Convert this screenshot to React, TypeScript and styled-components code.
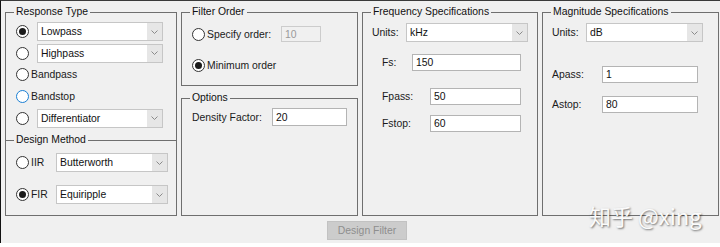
import React from 'react';
import styled, { createGlobalStyle } from 'styled-components';

const Global = createGlobalStyle`
  html, body { margin: 0; padding: 0; background: #ffffff; }
  body { font-family: "Liberation Sans", Arial, sans-serif; font-size: 10.4px; color: #000; }
`;

const Window = styled.div`
  position: relative;
  box-sizing: border-box;
  width: 720px;
  height: 243px;
  background: #f0f0f0;
  border-top: 1px solid #3a3a3a;
  border-left: 1px solid #111;
  padding: 5px 0 0 4px;
  display: flex;
  flex-direction: column;
`;

const Panels = styled.div`
  display: flex;
  gap: 4px;
  height: 210px;
`;

const Column = styled.div<{ $w: number }>`
  width: ${p => p.$w}px;
  display: flex;
  flex-direction: column;
`;

const Group = styled.fieldset<{ $h?: number; $mt?: number; $open?: boolean; $fill?: boolean }>`
  margin: ${p => p.$mt ?? 0}px 0 0 0;
  padding: 0;
  min-width: 0;
  border: 1px solid #6f6f6f;
  ${p => (p.$open ? 'border-bottom: none;' : '')}
  ${p => (p.$h ? `height: ${p.$h}px; flex: none;` : '')}
  ${p => (p.$fill ? 'flex: 1;' : '')}
  box-sizing: border-box;
`;

const Title = styled.legend`
  margin-left: 8px;
  padding: 0 2px;
  font-size: 10.4px;
  line-height: 12px;
  color: #111;
`;

const Body = styled.div<{ $pt: number; $pl: number; $gap?: number }>`
  display: flex;
  flex-direction: column;
  gap: ${p => p.$gap ?? 0}px;
  padding: ${p => p.$pt}px 0 0 ${p => p.$pl}px;
`;

const Row = styled.div<{ $h?: number; $mt?: number; $pl?: number }>`
  display: flex;
  align-items: center;
  height: ${p => p.$h ?? 19}px;
  margin-top: ${p => p.$mt ?? 0}px;
  padding-left: ${p => p.$pl ?? 0}px;
`;

const Radio = styled.span<{ $checked?: boolean; $focus?: boolean }>`
  box-sizing: border-box;
  flex: none;
  width: 13px;
  height: 13px;
  border-radius: 50%;
  border: 1px solid ${p => (p.$focus ? '#1a7fd4' : '#333')};
  background: #fff;
  display: flex;
  align-items: center;
  justify-content: center;
  &::after {
    content: '';
    display: ${p => (p.$checked ? 'block' : 'none')};
    width: 7px;
    height: 7px;
    border-radius: 50%;
    background: #1b1b1b;
  }
`;

const Label = styled.span<{ $w?: number; $ml?: number; $dim?: boolean }>`
  flex: none;
  ${p => (p.$w ? `width: ${p.$w}px;` : '')}
  margin-left: ${p => p.$ml ?? 0}px;
  color: ${p => (p.$dim ? '#999' : '#1a1a1a')};
  white-space: nowrap;
`;

const Select = styled.div<{ $w: number; $ml?: number }>`
  box-sizing: border-box;
  flex: none;
  width: ${p => p.$w}px;
  height: 19px;
  margin-left: ${p => p.$ml ?? 0}px;
  border: 1px solid #c6c6c6;
  background: #fff;
  display: flex;
  align-items: stretch;
`;

const SelectValue = styled.span`
  flex: 1;
  padding-left: 3px;
  display: flex;
  align-items: center;
  color: #111;
`;

const SelectArrow = styled.span`
  width: 15px;
  background: #e6e6e6;
  display: flex;
  align-items: center;
  justify-content: center;
`;

const Field = styled.div<{ $w: number; $h?: number; $disabled?: boolean }>`
  box-sizing: border-box;
  flex: none;
  width: ${p => p.$w}px;
  height: ${p => p.$h ?? 17}px;
  border: 1px solid ${p => (p.$disabled ? '#cccccc' : '#b4b4b4')};
  background: ${p => (p.$disabled ? '#f0f0f0' : '#fff')};
  color: ${p => (p.$disabled ? '#9a9a9a' : '#111')};
  padding-left: 3px;
  display: flex;
  align-items: center;
`;

const ButtonRow = styled.div`
  display: flex;
  padding: 5px 0 0 322px;
`;

const Button = styled.div`
  box-sizing: border-box;
  width: 80px;
  height: 19px;
  background: #cccccc;
  border: 1px solid #c2c2c2;
  color: #8e8e8e;
  display: flex;
  align-items: center;
  justify-content: center;
`;

const Watermark = styled.div`
  position: absolute;
  left: 588px;
  top: 199px;
  font-family: "Noto Sans CJK SC", "Noto Sans", sans-serif;
  font-size: 22px;
  line-height: 30px;
  color: #fbfbfb;
  text-shadow: 1px 1px 2px rgba(0, 0, 0, 0.55);
  white-space: nowrap;
  pointer-events: none;
`;

const Dropdown = ({ w, ml, value }: { w: number; ml?: number; value: string }) => (
  <Select $w={w} $ml={ml}>
    <SelectValue>{value}</SelectValue>
    <SelectArrow>
      <svg width="7" height="4" viewBox="0 0 7 4">
        <polyline points="0.5,0.5 3.5,3.5 6.5,0.5" fill="none" stroke="#8a8a8a" strokeWidth="1" />
      </svg>
    </SelectArrow>
  </Select>
);

export default function App() {
  return (
    <>
      <Global />
      <Window>
        <Panels>
          <Column $w={172}>
            <Group $h={134} $open>
              <Title>Response Type</Title>
              <Body $pt={3} $pl={10}>
                <Row $h={21.6}>
                  <Radio $checked />
                  <Dropdown w={126} ml={8} value="Lowpass" />
                </Row>
                <Row $h={21.6}>
                  <Radio />
                  <Dropdown w={126} ml={8} value="Highpass" />
                </Row>
                <Row $h={21.6}>
                  <Radio />
                  <Label $ml={2}>Bandpass</Label>
                </Row>
                <Row $h={21.6}>
                  <Radio $focus />
                  <Label $ml={2}>Bandstop</Label>
                </Row>
                <Row $h={21.6}>
                  <Radio />
                  <Dropdown w={126} ml={8} value="Differentiator" />
                </Row>
              </Body>
            </Group>
            <Group $mt={-6} $fill>
              <Title>Design Method</Title>
              <Body $pt={7} $pl={10} $gap={13}>
                <Row>
                  <Radio />
                  <Label $ml={2} $w={25}>IIR</Label>
                  <Dropdown w={112} value="Butterworth" />
                </Row>
                <Row>
                  <Radio $checked />
                  <Label $ml={2} $w={25}>FIR</Label>
                  <Dropdown w={112} value="Equiripple" />
                </Row>
              </Body>
            </Group>
          </Column>

          <Column $w={177}>
            <Group $h={80}>
              <Title>Filter Order</Title>
              <Body $pt={8} $pl={10} $gap={15}>
                <Row $h={16}>
                  <Radio />
                  <Label $ml={2} $w={74}>Specify order:</Label>
                  <Field $w={40} $h={16} $disabled>10</Field>
                </Row>
                <Row $h={16}>
                  <Radio $checked />
                  <Label $ml={2}>Minimum order</Label>
                </Row>
              </Body>
            </Group>
            <Group $mt={6} $fill>
              <Title>Options</Title>
              <Body $pt={4} $pl={10}>
                <Row $h={18}>
                  <Label $w={80}>Density Factor:</Label>
                  <Field $w={75} $h={18}>20</Field>
                </Row>
              </Body>
            </Group>
          </Column>

          <Column $w={176}>
            <Group $fill>
              <Title>Frequency Specifications</Title>
              <Body $pt={0} $pl={0}>
                <Row $mt={5} $pl={9}>
                  <Label $w={34}>Units:</Label>
                  <Dropdown w={122} value="kHz" />
                </Row>
                <Row $h={17} $mt={12} $pl={19}>
                  <Label $w={30}>Fs:</Label>
                  <Field $w={109}>150</Field>
                </Row>
                <Row $h={17} $mt={17} $pl={19}>
                  <Label $w={48}>Fpass:</Label>
                  <Field $w={91}>50</Field>
                </Row>
                <Row $h={17} $mt={10} $pl={19}>
                  <Label $w={48}>Fstop:</Label>
                  <Field $w={91}>60</Field>
                </Row>
              </Body>
            </Group>
          </Column>

          <Column $w={177}>
            <Group $fill>
              <Title>Magnitude Specifications</Title>
              <Body $pt={0} $pl={0}>
                <Row $mt={5} $pl={9}>
                  <Label $w={34}>Units:</Label>
                  <Dropdown w={117} value="dB" />
                </Row>
                <Row $h={17} $mt={24} $pl={9}>
                  <Label $w={50}>Apass:</Label>
                  <Field $w={96}>1</Field>
                </Row>
                <Row $h={17} $mt={13} $pl={9}>
                  <Label $w={50}>Astop:</Label>
                  <Field $w={96}>80</Field>
                </Row>
              </Body>
            </Group>
          </Column>
        </Panels>
        <ButtonRow>
          <Button>Design Filter</Button>
        </ButtonRow>
        <Watermark>知乎 @xing</Watermark>
      </Window>
    </>
  );
}
